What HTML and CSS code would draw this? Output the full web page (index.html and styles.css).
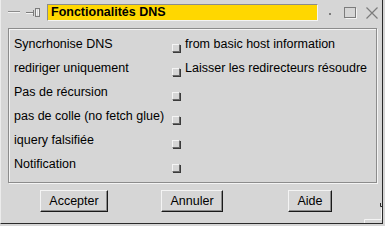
FILE: index.html
```html
<!DOCTYPE html>
<html>
<head>
	<meta charset="UTF-8">
	<title>Fonctionalités DNS</title>
	<link rel="stylesheet" href="styles.css">
</head>
<body>
	<div class="window">
		<div class="titlebar">
			<svg class="tb-min" width="12" height="3" viewBox="0 0 12 3"><rect x="0" y="0" width="12" height="1" fill="#8c8c8c"/><rect x="0" y="1" width="12" height="1" fill="#f4f4f4"/></svg>
			<svg class="tb-pin" width="15" height="11" viewBox="0 0 15 11">
				<path d="M0 5.5H7" stroke="#7c7c7c"/>
				<path d="M0 6.5H7" stroke="#f4f4f4"/>
				<path d="M7.5 3V9M9.5 1V10M13.5 1V10M10 1.5H13M10 9.5H13" stroke="#7c7c7c"/>
				<path d="M10.5 2.5V8.5M12.5 2.5V8.5" stroke="#f4f4f4"/>
			</svg>
			<div class="title">Fonctionalités DNS</div>
			<span class="tb-dot"></span>
			<svg class="tb-max" width="13" height="12" viewBox="0 0 13 12"><rect x="0.5" y="0.5" width="11" height="10" fill="none" stroke="#7c7c7c"/><path d="M1.5 11.5H12.5V1.5" stroke="#f4f4f4" fill="none"/></svg>
			<svg class="tb-close" width="13" height="12" viewBox="0 0 13 12"><path d="M0.5 0.5L11.5 11.5M11.5 0.5L0.5 11.5" stroke="#7c7c7c" stroke-width="1.2" fill="none"/></svg>
		</div>

		<div class="frame">
			<div class="row">
				<span class="label">Syncrhonise DNS</span>
				<span class="check"></span>
				<span class="extra">from basic host information</span>
			</div>
			<div class="row">
				<span class="label">rediriger uniquement</span>
				<span class="check"></span>
				<span class="extra">Laisser les redirecteurs résoudre</span>
			</div>
			<div class="row">
				<span class="label">Pas de récursion</span>
				<span class="check"></span>
			</div>
			<div class="row">
				<span class="label">pas de colle (no fetch glue)</span>
				<span class="check"></span>
			</div>
			<div class="row">
				<span class="label">iquery falsifiée</span>
				<span class="check"></span>
			</div>
			<div class="row">
				<span class="label">Notification</span>
				<span class="check"></span>
			</div>
		</div>

		<div class="buttons">
			<div class="cell"><button>Accepter</button></div>
			<div class="cell"><button>Annuler</button></div>
			<div class="cell"><button>Aide</button></div>
		</div>

		<svg class="grip" width="21" height="21" viewBox="0 0 21 21">
			<rect x="0" y="0" width="21" height="21" fill="#d6d6d6"/>
			<path d="M18.5 0V3.5H21" stroke="#2a2a2a" fill="none"/>
			<path d="M19.5 4.5V16.5H2.5V21" stroke="#f4f4f4" fill="none"/>
		</svg>
	</div>
</body>
</html>
```

FILE: styles.css
```css
* {
	padding: 0;
	margin: 0;
	box-sizing: border-box;
}

body {
	background: #d6d6d6;
	font-family: "Liberation Sans", Arial, sans-serif;
	font-size: 12.5px;
	color: #000;
}

.window {
	position: relative;
	width: 383px;
	height: 224px;
	background: #d6d6d6;
	border-left: 1px solid #ececec;
	border-right: 1px solid #2a2a2a;
	border-bottom: 1px solid #2a2a2a;
	overflow: hidden;
}

.titlebar {
	display: flex;
	align-items: center;
	height: 17px;
	margin-top: 4px;
	padding-left: 7px;
}

.tb-min {
	display: block;
}

.tb-pin {
	display: block;
	margin-left: 6px;
}

.title {
	width: 271px;
	height: 17px;
	margin-left: 6px;
	background: #ffd700;
	border-top: 1px solid #8c8c8c;
	border-left: 1px solid #8c8c8c;
	border-bottom: 1px solid #f4f4f4;
	border-right: 1px solid #f4f4f4;
	font-weight: bold;
	font-size: 12.5px;
	line-height: 14px;
	padding-left: 3px;
}

.tb-dot {
	width: 2px;
	height: 2px;
	background: #7c7c7c;
	margin-left: 11px;
	margin-top: 2px;
}

.tb-max {
	display: block;
	margin-left: 13px;
}

.tb-close {
	display: block;
	margin-left: 9px;
}

.frame {
	width: 369px;
	height: 155px;
	margin-top: 7px;
	margin-left: 7px;
	border: 1px solid #8c8c8c;
	box-shadow: 1px 1px 0 #f4f4f4, inset 1px 1px 0 #f4f4f4;
	padding: 3px 0 0 5px;
}

.row {
	display: flex;
	align-items: flex-start;
	height: 24px;
	line-height: 24px;
	white-space: nowrap;
}

.label {
	width: 158px;
}

.check {
	width: 8px;
	height: 8px;
	margin-top: 12px;
	background: #d6d6d6;
	border-top: 1px solid #f4f4f4;
	border-left: 1px solid #f4f4f4;
	border-bottom: 1px solid #6a6a6a;
	border-right: 1px solid #6a6a6a;
	box-shadow: 1px 1px 0 #3a3a3a;
}

.extra {
	margin-left: 5px;
}

.buttons {
	display: flex;
	margin-top: 7px;
	padding: 0 13px 0 14px;
}

.cell {
	flex: 1;
	display: flex;
	justify-content: center;
}

button {
	height: 22px;
	padding: 0 8px;
	font-family: "Liberation Sans", Arial, sans-serif;
	font-size: 12.5px;
	color: #000;
	background: #d6d6d6;
	border-top: 1px solid #f4f4f4;
	border-left: 1px solid #f4f4f4;
	border-bottom: 1px solid #1a1a1a;
	border-right: 1px solid #1a1a1a;
	box-shadow: inset -1px -1px 0 #8c8c8c;
}

.grip {
	position: absolute;
	right: -1px;
	bottom: -1px;
	display: block;
}
```
